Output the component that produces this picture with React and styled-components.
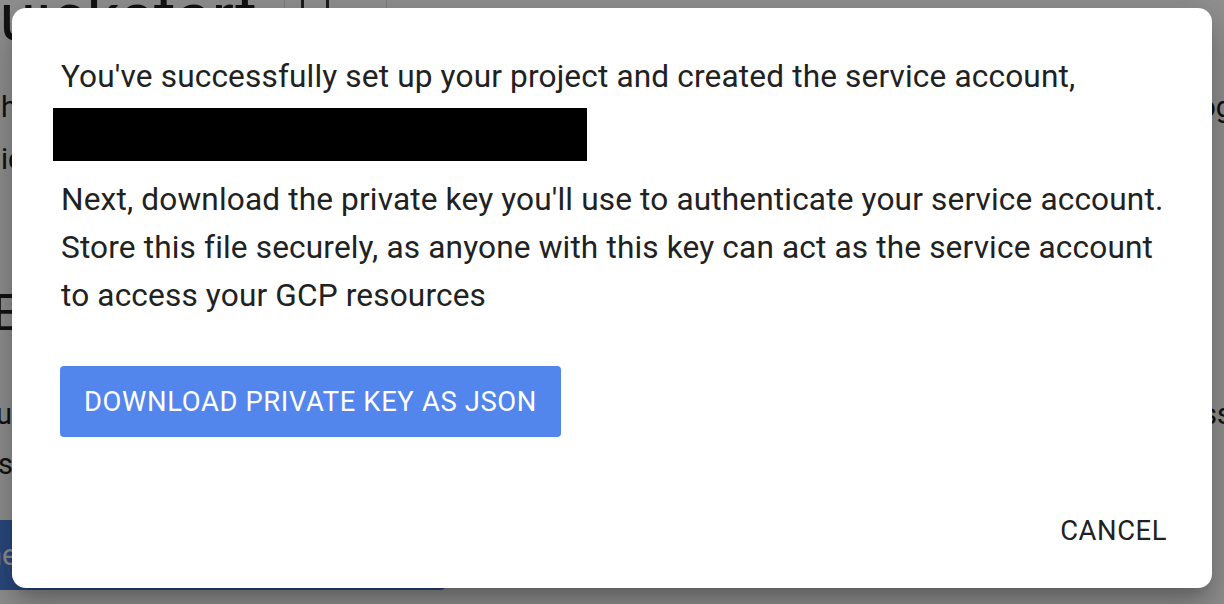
import React from "react";
import styled, { createGlobalStyle } from "styled-components";

const Global = createGlobalStyle`
  html, body { margin: 0; padding: 0; background: #fff; }
  body { font-family: Roboto, "Noto Sans", Arial, sans-serif; overflow: hidden; }
  #root { width: 1224px; height: 604px; position: relative; overflow: hidden; }
`;

const Page = styled.div`
  width: 1224px;
  height: 604px;
  position: relative;
  overflow: hidden;
  background: #fff;
  color: #222;
`;

const HeaderRow = styled.div`
  display: flex;
  align-items: flex-start;
  height: 60px;
  margin-top: -20px;
  margin-left: -46px;
`;

const Title = styled.h1`
  margin: 0;
  font-size: 66px;
  font-weight: 400;
  line-height: 76px;
  width: 330px;
  letter-spacing: 0;
`;

const Divider = styled.div`
  width: 1px;
  height: 60px;
  background: #ddd;
`;

const ToolIcon = styled.div`
  width: 22px;
  height: 40px;
  border: 3px solid #333;
  border-radius: 6px;
  margin: -12px 57px 0 16px;
`;

const Body = styled.div`
  margin-left: 0;
  width: 1232px;
  display: flex;
  flex-direction: column;
`;

const BgLine = styled.p`
  margin: ${(p) => p.$mt || 0}px 0 0 ${(p) => p.$ml || 0}px;
  font-size: 29px;
  line-height: ${(p) => p.$lh || 52}px;
  white-space: nowrap;
  display: flex;
  justify-content: space-between;
`;

const BgHeading = styled.p`
  margin: ${(p) => p.$mt || 0}px 0 0 -8px;
  font-size: 50px;
  line-height: 52px;
`;

const BgButton = styled.div`
  margin-top: ${(p) => p.$mt || 0}px;
  width: 448px;
  height: 70px;
  border-radius: 0 0 8px 0;
  background: #4a82e1;
  color: #fff;
  font-size: 29px;
  line-height: 70px;
  text-indent: -14px;
  overflow: hidden;
`;

const Overlay = styled.div`
  position: absolute;
  inset: 0;
  background: rgba(0, 0, 0, 0.43);
`;

const Dialog = styled.div`
  position: absolute;
  left: 12px;
  top: 8px;
  width: 1200px;
  height: 580px;
  box-sizing: border-box;
  background: #fff;
  border-radius: 14px;
  box-shadow: 0 11px 15px -7px rgba(0,0,0,0.2), 0 24px 38px 3px rgba(0,0,0,0.14), 0 9px 46px 8px rgba(0,0,0,0.12);
  display: flex;
  flex-direction: column;
  color: #212121;
`;

const Content = styled.div`
  padding: 45px 49px 0 49px;
  flex: 1;
  display: flex;
  flex-direction: column;
  align-items: flex-start;
`;

const Text = styled.p`
  margin: ${(p) => p.$mt || 0}px 0 0 0;
  font-size: 31.6px;
  line-height: 48px;
  letter-spacing: 0.15px;
  white-space: nowrap;
`;

const Redacted = styled.span`
  display: block;
  margin: 7px 0 0 -8px;
  width: 534px;
  height: 53px;
  background: #000;
`;

const PrimaryButton = styled.button`
  margin: 46px 0 0 -1px;
  width: 501px;
  height: 71px;
  border: none;
  border-radius: 4px;
  background: #5386ec;
  color: #fff;
  font-family: Roboto, Arial, sans-serif;
  font-size: 27.4px;
  font-weight: 400;
  letter-spacing: 0.63px;
  text-transform: uppercase;
  padding: 0;
  cursor: pointer;
`;

const Actions = styled.div`
  display: flex;
  justify-content: flex-end;
  padding: 0 45px 37px 0;
`;

const TextButton = styled.button`
  border: none;
  background: transparent;
  color: #212121;
  font-family: Roboto, Arial, sans-serif;
  font-size: 27.4px;
  letter-spacing: 0.57px;
  text-transform: uppercase;
  padding: 0;
  height: 40px;
  cursor: pointer;
`;

export default function App() {
  return (
    <>
      <Global />
      <Page>
        <HeaderRow>
          <Title>Quickstart</Title>
          <Divider />
          <ToolIcon />
          <Divider />
        </HeaderRow>
        <Body>
          <BgLine $mt={41} $ml={1}>
            <span>his guide shows how to set up your project</span>
            <span>blog</span>
          </BgLine>
          <BgLine $ml={1}>
            <span>ice and services for your application</span>
            <span></span>
          </BgLine>
          <BgHeading $mt={102}>Enable access</BgHeading>
          <BgLine $mt={50} $lh={50} $ml={-4}>
            <span>ur following steps create credentials</span>
            <span>access</span>
          </BgLine>
          <BgLine $lh={50} $ml={-2}>
            <span>sessions</span>
            <span></span>
          </BgLine>
          <BgButton $mt={31}>ne credentials</BgButton>
        </Body>
        <Overlay />
        <Dialog role="dialog">
          <Content>
            <Text>You've successfully set up your project and created the service account,</Text>
            <Redacted />
            <Text $mt={15}>
              Next, download the private key you'll use to authenticate your service account.
              <br />
              Store this file securely, as anyone with this key can act as the service account
              <br />
              to access your GCP resources
            </Text>
            <PrimaryButton>Download private key as JSON</PrimaryButton>
          </Content>
          <Actions>
            <TextButton>Cancel</TextButton>
          </Actions>
        </Dialog>
      </Page>
    </>
  );
}
